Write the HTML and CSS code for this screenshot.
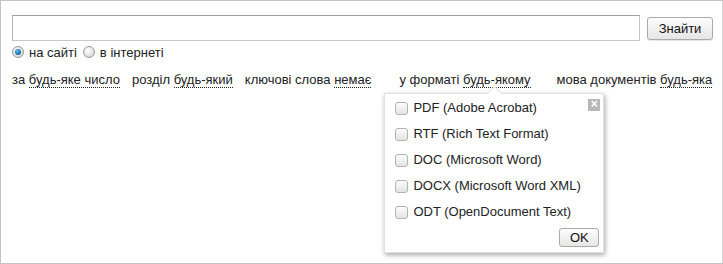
FILE: index.html
```html
<!DOCTYPE html>
<html lang="uk">
<head>
    <meta charset="UTF-8">
    <title>Пошук</title>
    <link rel="stylesheet" href="styles.css">
</head>
<body>
    <div class="search-box">
        <div class="search-row">
            <input type="text" class="search-input">
            <button class="search-btn">Знайти</button>
        </div>

        <div class="scope-row">
            <label class="radio checked"><span class="radio-dot"></span>на сайті</label>
            <label class="radio"><span class="radio-dot"></span>в інтернеті</label>
        </div>

        <div class="filters">
            <span class="filter">за <a class="dotted">будь-яке число</a></span>
            <span class="filter">розділ <a class="dotted">будь-який</a></span>
            <span class="filter">ключові слова <a class="dotted">немає</a></span>
            <span class="filter open">у форматі <a class="dotted">будь-якому</a>
                <div class="popup">
                    <span class="popup-close">&times;</span>
                    <label class="check"><span class="check-box"></span>PDF (Adobe Acrobat)</label>
                    <label class="check"><span class="check-box"></span>RTF (Rich Text Format)</label>
                    <label class="check"><span class="check-box"></span>DOC (Microsoft Word)</label>
                    <label class="check"><span class="check-box"></span>DOCX (Microsoft Word XML)</label>
                    <label class="check"><span class="check-box"></span>ODT (OpenDocument Text)</label>
                    <div class="popup-footer">
                        <button class="ok-btn">OK</button>
                    </div>
                </div>
            </span>
            <span class="filter">мова документів <a class="dotted">будь-яка</a></span>
        </div>
    </div>
</body>
</html>
```

FILE: styles.css
```css
* {
    margin: 0;
    padding: 0;
    box-sizing: border-box;
}

body {
    font-family: Arial, "Liberation Sans", sans-serif;
    font-size: 13px;
    color: #222;
    background: #fff;
}

.search-box {
    width: 723px;
    height: 264px;
    border: 1px solid #c4c4c4;
    border-right-color: #d0d0d0;
    padding: 14px 9px 0 11px;
}

.search-row {
    display: flex;
    align-items: center;
    gap: 7px;
}

.search-input {
    flex: 1;
    height: 26px;
    border: 1px solid #c8c8c8;
    border-top-color: #a0a0a0;
    border-left-color: #b4b4b4;
    outline: none;
    font-size: 13px;
    padding: 0 4px;
}

.search-btn {
    width: 66px;
    height: 23px;
    border: 1px solid #aaa;
    border-radius: 3px;
    background: linear-gradient(#fdfdfd, #e6e6e6);
    font-family: Arial, "Liberation Sans", sans-serif;
    font-size: 13px;
    color: #111;
    box-shadow: 0 1px 1px rgba(0,0,0,0.1);
}

.scope-row {
    display: flex;
    gap: 6px;
    margin-top: 2px;
    height: 18px;
    align-items: center;
}

.radio {
    display: flex;
    align-items: center;
    gap: 5px;
}

.radio-dot {
    width: 12px;
    height: 12px;
    border-radius: 50%;
    border: 1px solid #999;
    background: radial-gradient(circle at 40% 35%, #fff 0%, #dedede 70%, #c8c8c8 100%);
    position: relative;
}

.radio.checked .radio-dot::after {
    content: '';
    position: absolute;
    left: 2px;
    top: 2px;
    width: 6px;
    height: 6px;
    border-radius: 50%;
    background: radial-gradient(circle at 40% 35%, #5cc0f0 0%, #1a6fa8 60%, #0d4a78 100%);
}

.filters {
    display: flex;
    gap: 12px;
    margin-top: 11px;
    line-height: 16px;
}

.filter.open {
    position: relative;
    margin: 0 14px 0 16px;
}

.dotted {
    color: #222;
    text-decoration: none;
    border-bottom: 1px dotted #222;
    cursor: pointer;
}

.popup {
    position: absolute;
    left: -15px;
    top: 21px;
    width: 220px;
    height: 160px;
    background: #fff;
    border: 1px solid #e2e2e2;
    box-shadow: 1px 2px 5px rgba(0,0,0,0.35);
    padding: 1px 0 0 10px;
    display: flex;
    flex-direction: column;
    z-index: 5;
}

.popup::before {
    content: '';
    position: absolute;
    left: 104px;
    top: -6px;
    width: 10px;
    height: 10px;
    background: #fff;
    border-left: 1px solid #e2e2e2;
    border-top: 1px solid #e2e2e2;
    transform: rotate(45deg);
}

.popup-close {
    position: absolute;
    right: 3px;
    top: 5px;
    width: 12px;
    height: 12px;
    background: #b8b8b8;
    color: #fff;
    font-size: 12px;
    line-height: 11px;
    text-align: center;
    font-weight: bold;
}

.check {
    display: flex;
    align-items: center;
    gap: 5px;
    height: 26px;
    color: #222;
}

.check-box {
    width: 13px;
    height: 13px;
    border: 1px solid #b2b2b2;
    border-radius: 3px;
    background: linear-gradient(#fcfcfc, #e4e4e4);
}

.popup-footer {
    display: flex;
    justify-content: flex-end;
    padding-right: 4px;
    margin-top: 3px;
}

.ok-btn {
    width: 40px;
    height: 19px;
    border: 1px solid #aaa;
    border-radius: 3px;
    background: linear-gradient(#fdfdfd, #e6e6e6);
    font-family: Arial, "Liberation Sans", sans-serif;
    font-size: 13px;
    color: #111;
}
```
